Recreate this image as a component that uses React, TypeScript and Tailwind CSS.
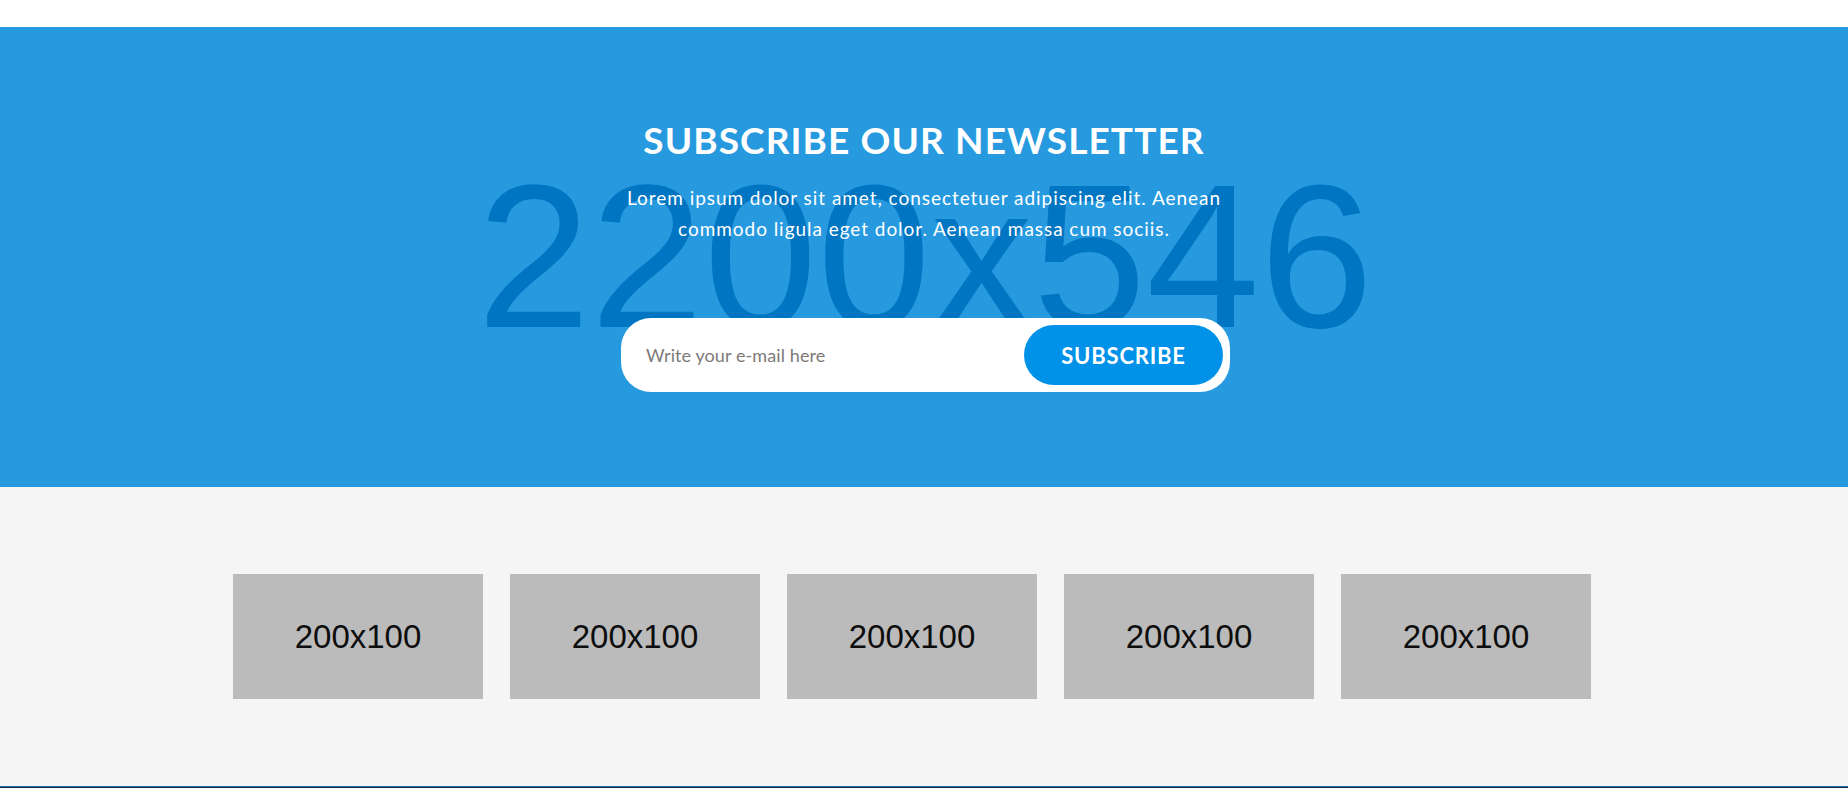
import React from "react";

const logos = [1, 2, 3, 4, 5];

export default function App() {
  return (
    <div className="min-h-screen bg-white" style={{ fontFamily: "Lato, 'Open Sans', sans-serif" }}>
      <div className="h-[27px] bg-white" />

      {/* NEWSLETTER */}
      <section className="relative h-[460px] overflow-hidden bg-[#2699df]">
        <div
          className="absolute inset-x-0 top-[127px] pl-[2px] text-center text-[204px] leading-none text-[#0075c1] select-none"
          style={{ fontFamily: "'Liberation Sans', Arial, sans-serif" }}
        >
          2200x546
        </div>

        <div className="relative flex flex-col items-center pt-[91px]">
          <h2 className="text-[37px] font-bold leading-[1.2] tracking-[1.1px] text-white">
            SUBSCRIBE OUR NEWSLETTER
          </h2>
          <p className="mt-[20px] whitespace-nowrap text-center text-[19px] leading-[31px] tracking-[0.95px] text-white">
            Lorem ipsum dolor sit amet, consectetuer adipiscing elit. Aenean
            <br />
            commodo ligula eget dolor. Aenean massa cum sociis.
          </p>

          <form className="ml-[3px] mt-[74px] flex h-[74px] w-[609px] items-center rounded-[30px] bg-white pl-[25px] pr-[7px]">
            <input
              type="email"
              placeholder="Write your e-mail here"
              className="h-full flex-1 bg-transparent text-[18px] tracking-[0.1px] text-[#555] outline-none placeholder:text-[#7d7a78]"
            />
            <button
              type="button"
              className="h-[60px] w-[199px] rounded-full bg-[#0091e8] text-[22px] font-bold tracking-[0.8px] text-white"
            >
              SUBSCRIBE
            </button>
          </form>
        </div>
      </section>

      {/* PARTNERS */}
      <section className="bg-[#f5f5f5] py-[87px]">
        <div className="flex justify-center gap-[27px] pr-[24px]">
          {logos.map((n) => (
            <div
              key={n}
              className="flex h-[125px] w-[250px] items-center justify-center bg-[#bbbbbb] text-[33px] text-[#0d0d0d]"
              style={{ fontFamily: "'Liberation Sans', Arial, sans-serif" }}
            >
              200x100
            </div>
          ))}
        </div>
      </section>

      <footer className="h-[60px] border-t border-[#1b6fa8] bg-[#1f2d3a]" />
    </div>
  );
}
